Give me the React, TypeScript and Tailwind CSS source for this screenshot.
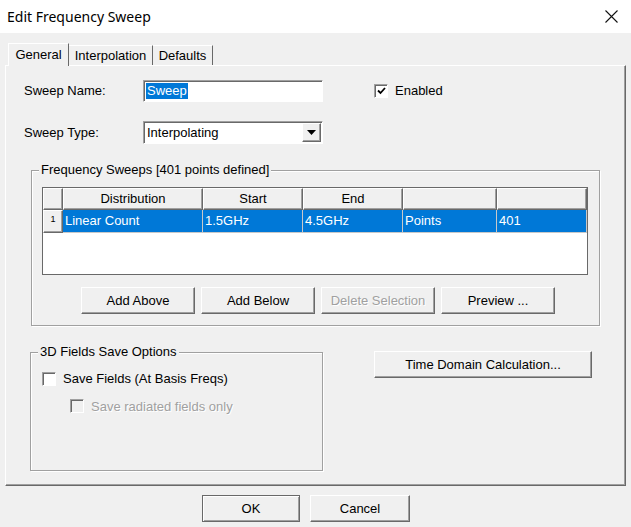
import React from 'react';

const raised =
  'border border-t-white border-l-white border-r-[#696969] border-b-[#696969] shadow-[inset_-1px_-1px_0_#a0a0a0]';
const sunken =
  'border border-t-[#a0a0a0] border-l-[#a0a0a0] border-r-white border-b-white shadow-[inset_1px_1px_0_#696969]';

function Button({ label, width, disabled }: { label: string; width: string; disabled?: boolean }) {
  return (
    <button
      type="button"
      className={`${raised} ${width} h-[27px] bg-[#f0f0f0] text-[13px] ${
        disabled ? 'text-[#a0a0a0] [text-shadow:1px_1px_0_#fff]' : 'text-black'
      }`}
    >
      {label}
    </button>
  );
}

function Check({ checked, disabled }: { checked?: boolean; disabled?: boolean }) {
  return (
    <span
      className={`${sunken} flex h-[14px] w-[14px] items-center justify-center ${
        disabled ? 'bg-[#f0f0f0]' : 'bg-white'
      }`}
    >
      {checked ? (
        <svg width="9" height="8" viewBox="0 0 9 8">
          <path d="M1 3.5 L3.5 6 L8 1" stroke="#000" strokeWidth="1.8" fill="none" />
        </svg>
      ) : null}
    </span>
  );
}

function Group({ title, className, children }: { title: string; className: string; children: React.ReactNode }) {
  return (
    <div
      className={`relative border border-[#a0a0a0] shadow-[inset_1px_1px_0_#fff,1px_1px_0_#fff] ${className}`}
    >
      <span className="absolute left-[7px] top-[-9px] bg-[#f0f0f0] px-[2px] leading-[16px]">{title}</span>
      {children}
    </div>
  );
}

const columns = [
  { title: 'Distribution', width: 'w-[140px]', value: 'Linear Count' },
  { title: 'Start', width: 'w-[100px]', value: '1.5GHz' },
  { title: 'End', width: 'w-[100px]', value: '4.5GHz' },
  { title: '', width: 'w-[94px]', value: 'Points' },
  { title: '', width: 'w-[90px]', value: '401' },
];

export default function App() {
  return (
    <div className="flex h-[527px] w-[631px] flex-col bg-[#f0f0f0] font-['Liberation_Sans',Arial,sans-serif] text-[13px] text-black">
      {/* title bar */}
      <div className="flex h-[33px] items-center justify-between bg-white pl-[7px] pr-[13px]">
        <span className="font-['Noto_Sans',sans-serif] text-[14px] text-black">Edit Frequency Sweep</span>
        <svg width="13" height="13" viewBox="0 0 13 13">
          <path d="M0.5 0.5 L12.5 12.5 M12.5 0.5 L0.5 12.5" stroke="#111" strokeWidth="1.1" />
        </svg>
      </div>

      {/* tabs */}
      <div className="flex flex-col px-[5px] pt-[10px]">
        <div className="flex items-end pl-[3px]">
          <div className="relative z-10 mb-[-1px] flex h-[23px] w-[61px] items-start justify-center border border-b-0 border-t-white border-l-white border-r-[#696969] bg-[#f0f0f0] pt-[1px]">
            General
          </div>
          <div className="flex h-[20px] w-[84px] items-center justify-center border border-b-0 border-t-white border-l-0 border-r-[#696969]">
            Interpolation
          </div>
          <div className="flex h-[20px] w-[60px] items-center justify-center border border-b-0 border-t-white border-l-0 border-r-[#696969]">
            Defaults
          </div>
        </div>

        {/* panel */}
        <div className="flex h-[421px] w-[621px] flex-col border border-t-white border-l-white border-r-[#696969] border-b-[#696969] shadow-[inset_-1px_-1px_0_#a0a0a0] pl-[18px]">
          <div className="mt-[14px] flex items-center">
            <span className="w-[119px]">Sweep Name:</span>
            <div className={`${sunken} flex h-[22px] w-[180px] items-center bg-white px-[2px]`}>
              <span className="bg-[#0078d7] px-[1px] leading-[16px] text-white">Sweep</span>
            </div>
            <div className="ml-[51px] flex items-center gap-[7px]">
              <Check checked />
              <span>Enabled</span>
            </div>
          </div>

          <div className="mt-[19px] flex items-center">
            <span className="w-[119px]">Sweep Type:</span>
            <div className={`${sunken} flex h-[23px] w-[180px] items-center justify-between bg-white pl-[3px] pr-[1px]`}>
              <span>Interpolating</span>
              <span className={`${raised} flex h-[19px] w-[19px] items-center justify-center bg-[#f0f0f0]`}>
                <svg width="9" height="5" viewBox="0 0 9 5">
                  <path d="M0 0 H9 L4.5 5 Z" fill="#000" />
                </svg>
              </span>
            </div>
          </div>

          <Group title="Frequency Sweeps [401 points defined]" className="ml-[7px] mt-[26px] h-[156px] w-[569px] pl-[10px] pt-[16px]">
            <div className="flex h-[88px] w-[546px] flex-col border border-[#696969] bg-white">
              <div className="flex h-[22px]">
                <div className={`${raised} h-full w-[20px] bg-[#f0f0f0]`} />
                {columns.map((c, i) => (
                  <div
                    key={i}
                    className={`${raised} ${c.width} flex h-full items-center justify-center bg-[#f0f0f0]`}
                  >
                    {c.title}
                  </div>
                ))}
              </div>
              <div className="flex h-[23px]">
                <div className={`${raised} flex h-full w-[20px] items-start justify-center bg-[#f0f0f0] pt-[2px] text-[9px]`}>
                  1
                </div>
                {columns.map((c, i) => (
                  <div
                    key={i}
                    className={`${c.width} flex h-full items-center border-r border-b border-[#c8c8c8] bg-[#0078d7] pl-[2px] text-white`}
                  >
                    {c.value}
                  </div>
                ))}
              </div>
            </div>
            <div className="mt-[12px] flex gap-[6px] pl-[39px]">
              <Button label="Add Above" width="w-[114px]" />
              <Button label="Add Below" width="w-[114px]" />
              <Button label="Delete Selection" width="w-[114px]" disabled />
              <Button label="Preview ..." width="w-[114px]" />
            </div>
          </Group>

          <div className="mt-[26px] flex items-start">
            <Group title="3D Fields Save Options" className="ml-[6px] h-[119px] w-[293px] pl-[11px] pt-[16px]">
              <div className="flex items-center gap-[7px]">
                <Check />
                <span>Save Fields (At Basis Freqs)</span>
              </div>
              <div className="mt-[8px] ml-[28px] flex items-center gap-[7px]">
                <Check disabled />
                <span className="text-[#a0a0a0] [text-shadow:1px_1px_0_#fff]">Save radiated fields only</span>
              </div>
            </Group>
            <div className="ml-[51px] mt-[-1px]">
              <Button label="Time Domain Calculation..." width="w-[218px]" />
            </div>
          </div>
        </div>
      </div>

      {/* bottom buttons */}
      <div className="mt-[9px] flex gap-[10px] pl-[202px]">
        <button type="button" className="h-[27px] w-[98px] border border-[#696969] bg-[#f0f0f0] shadow-[inset_1px_1px_0_#fff,inset_-1px_-1px_0_#a0a0a0,inset_0_0_0_1px_#fff]">
          OK
        </button>
        <Button label="Cancel" width="w-[100px]" />
      </div>
    </div>
  );
}
